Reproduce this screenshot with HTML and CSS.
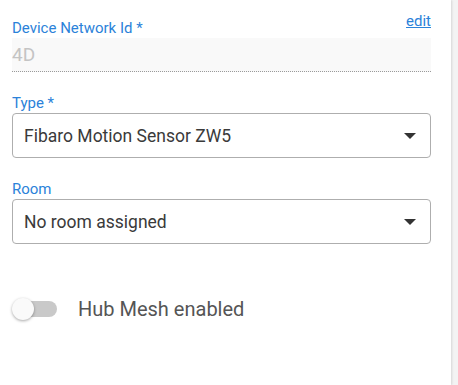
FILE: index.html
```html
<!DOCTYPE html>
<html>
<head>
<meta charset="utf-8">
<link rel="stylesheet" href="styles.css">
</head>
<body>
<div class="panel">
  <div class="field">
    <div class="field-head">
      <span class="label label-first">Device Network Id *</span>
      <a class="edit" href="#">edit</a>
    </div>
    <div class="readonly">4D</div>
  </div>

  <div class="field">
    <div class="label">Type *</div>
    <div class="select">
      <span class="select-text">Fibaro Motion Sensor ZW5</span>
      <span class="caret"></span>
    </div>
  </div>

  <div class="field">
    <div class="label">Room</div>
    <div class="select">
      <span class="select-text">No room assigned</span>
      <span class="caret"></span>
    </div>
  </div>

  <div class="toggle-row">
    <div class="switch">
      <span class="track"></span>
      <span class="knob"></span>
    </div>
    <span class="toggle-text">Hub Mesh enabled</span>
  </div>
</div>
</body>
</html>
```

FILE: styles.css
```css
html, body {
  margin: 0;
  padding: 0;
}
body {
  width: 458px;
  height: 385px;
  background: linear-gradient(to right, #e4e4e4, #f3f3f3 40%, #f3f3f3);
  font-family: Roboto, "Liberation Sans", sans-serif;
  overflow: hidden;
}
.panel {
  width: 451px;
  height: 385px;
  box-sizing: border-box;
  background: #fff;
  padding: 12px 20px 0 12px;
  box-shadow: 1px 0 2px rgba(0, 0, 0, 0.12);
}
.field {
  width: 419px;
  margin-bottom: 22px;
}
.field-head {
  display: flex;
  justify-content: space-between;
  align-items: flex-start;
  margin-bottom: 1px;
}
.label {
  display: block;
  font-size: 15px;
  line-height: 18px;
  color: #2b82d9;
  margin-bottom: 1px;
}
.label-first {
  margin-top: 7px;
  margin-bottom: 0;
}
.edit {
  font-size: 15px;
  line-height: 18px;
  color: #2b82d9;
  text-decoration: underline;
}
.readonly {
  box-sizing: border-box;
  height: 34px;
  padding-top: 6px;
  background: #f9f9f9;
  border-bottom: 1px dotted #9a9a9a;
  font-size: 19px;
  line-height: 22px;
  color: #c4c4c4;
}
.select {
  height: 45px;
  box-sizing: border-box;
  border: 1px solid #aeaeae;
  border-radius: 4px;
  display: flex;
  align-items: center;
  justify-content: space-between;
  padding: 0 14px 0 11px;
}
.select-text {
  font-size: 17.5px;
  color: #3a3a3a;
}
.caret {
  width: 0;
  height: 0;
  border-left: 6px solid transparent;
  border-right: 6px solid transparent;
  border-top: 6px solid #333;
}
.toggle-row {
  display: flex;
  align-items: center;
  height: 40px;
  margin-top: 45px;
}
.switch {
  position: relative;
  width: 45px;
  height: 22px;
  margin-right: 21px;
}
.track {
  position: absolute;
  left: 7px;
  right: 0;
  top: 3px;
  height: 16px;
  border-radius: 8px;
  background: #c9c9c9;
}
.knob {
  position: absolute;
  left: 0;
  top: 0;
  width: 22px;
  height: 22px;
  border-radius: 50%;
  background: #fafafa;
  box-shadow: 0 1px 3px rgba(0, 0, 0, 0.35);
}
.toggle-text {
  font-size: 20px;
  color: #555;
}
```
